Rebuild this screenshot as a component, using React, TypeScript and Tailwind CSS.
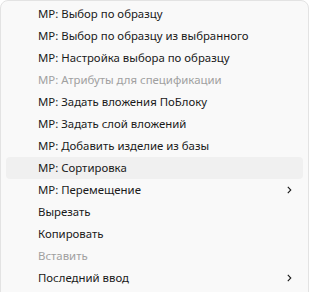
const items = [
  { label: 'MP: Выбор по образцу' },
  { label: 'MP: Выбор по образцу из выбранного' },
  { label: 'MP: Настройка выбора по образцу' },
  { label: 'MP: Атрибуты для спецификации', disabled: true },
  { label: 'MP: Задать вложения ПоБлоку' },
  { label: 'MP: Задать слой вложений' },
  { label: 'MP: Добавить изделие из базы' },
  { label: 'MP: Сортировка', active: true },
  { label: 'MP: Перемещение', submenu: true },
  { label: 'Вырезать' },
  { label: 'Копировать' },
  { label: 'Вставить', disabled: true },
  { label: 'Последний ввод', submenu: true },
];

function Chevron() {
  return (
    <svg width="5" height="8" viewBox="0 0 5 8" className="text-[#1a1a1a]">
      <path d="M0.8 0.8l3 3.2-3 3.2" fill="none" stroke="currentColor" strokeWidth="1.1" />
    </svg>
  );
}

export default function App() {
  return (
    <div className="w-[310px] h-[292px] bg-white overflow-hidden">
      <div
        className="w-[309px] h-[300px] bg-[#f9f9f9] border border-[#e3e3e3] rounded-lg px-[5px] pt-[2px]"
        style={{ fontFamily: '"Noto Sans", sans-serif' }}
      >
        {items.map((it, i) => (
          <div
            key={i}
            className={`h-[22px] flex items-center pl-8 pr-[11px] rounded ${
              it.active ? 'bg-[#f0f0f0]' : ''
            }`}
          >
            <span
              className={`flex-1 text-[11.4px] leading-none ${
                it.disabled ? 'text-[#a0a0a0]' : 'text-[#1a1a1a]'
              }`}
            >
              {it.label}
            </span>
            {it.submenu && <Chevron />}
          </div>
        ))}
      </div>
    </div>
  );
}
